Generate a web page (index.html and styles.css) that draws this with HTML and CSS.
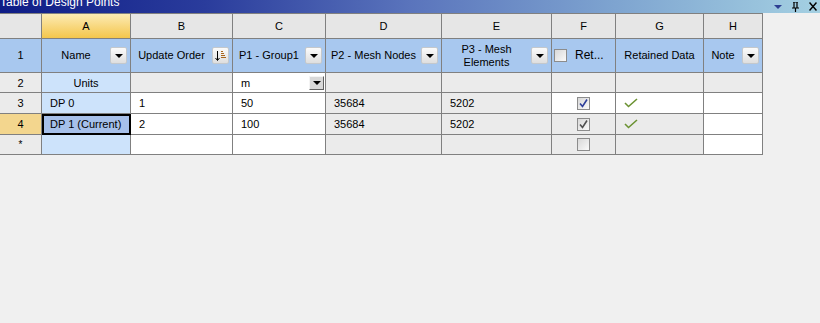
FILE: index.html
```html
<!DOCTYPE html>
<html lang="en">
<head>
  <meta charset="UTF-8">
  <title>Table of Design Points</title>
  <link rel="stylesheet" href="styles.css">
</head>
<body>

<div class="titlebar">
  <span class="title">Table of Design Points</span>
  <div class="wincontrols">
    <svg width="8" height="5" viewBox="0 0 8 5"><polygon points="0,1 8,1 4,5" fill="#2d3f92"/></svg>
    <svg width="9" height="10" viewBox="0 0 9 10"><path d="M2 0h5M3 0v6M6 0v6M1 6h7M4.5 6v4" stroke="#000" stroke-width="1.2" fill="none"/></svg>
    <svg width="8" height="9" viewBox="0 0 8 9"><path d="M0.5 0.5l7 8M7.5 0.5l-7 8" stroke="#000" stroke-width="1.5"/></svg>
  </div>
</div>

<table class="grid">
  <colgroup>
    <col class="c-num"><col class="c-a"><col class="c-b"><col class="c-c"><col class="c-d">
    <col class="c-e"><col class="c-f"><col class="c-g"><col class="c-h">
  </colgroup>
  <tr class="letters">
    <td></td>
    <td class="active">A</td>
    <td>B</td><td>C</td><td>D</td><td>E</td><td>F</td><td>G</td><td>H</td>
  </tr>
  <tr class="heads">
    <td class="num">1</td>
    <td><div class="hcell"><span class="label">Name</span><span class="drop"></span></div></td>
    <td><div class="hcell"><span class="label">Update Order</span>
      <span class="drop sort"><svg width="11" height="12" viewBox="0 0 11 12">
        <path d="M2.5 1v9M0.5 8l2 2.5 2-2.5" stroke="#000" stroke-width="1" fill="none"/>
        <path d="M6 1.5h2M6 3.5h3M6 5.5h4M6 7.5h5" stroke="#a8661f" stroke-width="1"/>
      </svg></span></div></td>
    <td><div class="hcell"><span class="label">P1 - Group1</span><span class="drop"></span></div></td>
    <td><div class="hcell"><span class="label">P2 - Mesh Nodes</span><span class="drop"></span></div></td>
    <td><div class="hcell"><span class="label">P3 - Mesh<br>Elements</span><span class="drop"></span></div></td>
    <td><div class="hcell left"><span class="box"></span><span class="ret">Ret...</span></div></td>
    <td class="center">Retained Data</td>
    <td><div class="hcell"><span class="label">Note</span><span class="drop"></span></div></td>
  </tr>
  <tr>
    <td class="num">2</td>
    <td class="name center">Units</td>
    <td class="gray"></td>
    <td class="white"><div class="combo"><span>m</span><span class="combobtn"></span></div></td>
    <td class="gray"></td><td class="gray"></td><td class="gray"></td><td class="gray"></td><td class="gray"></td>
  </tr>
  <tr>
    <td class="num">3</td>
    <td class="name">DP 0</td>
    <td class="white">1</td>
    <td class="white">50</td>
    <td class="gray">35684</td>
    <td class="gray">5202</td>
    <td class="white center"><span class="box checked"><svg width="11" height="11" viewBox="0 0 11 11"><path d="M2 5.5l2.5 3 4.5-7" stroke="#2e3f9a" stroke-width="1.6" fill="none"/></svg></span></td>
    <td class="white"><svg class="tick" width="14" height="10" viewBox="0 0 14 10"><path d="M1 5l3.5 3.5 8.5-7.5" stroke="#6b9232" stroke-width="1.6" fill="none"/></svg></td>
    <td class="white"></td>
  </tr>
  <tr>
    <td class="num current">4</td>
    <td class="name selected">DP 1 (Current)</td>
    <td class="white">2</td>
    <td class="white">100</td>
    <td class="gray">35684</td>
    <td class="gray">5202</td>
    <td class="gray center"><span class="box checked"><svg width="11" height="11" viewBox="0 0 11 11"><path d="M2 5.5l2.5 3 4.5-7" stroke="#505050" stroke-width="1.6" fill="none"/></svg></span></td>
    <td class="gray"><svg class="tick" width="14" height="10" viewBox="0 0 14 10"><path d="M1 5l3.5 3.5 8.5-7.5" stroke="#6b9232" stroke-width="1.6" fill="none"/></svg></td>
    <td class="white"></td>
  </tr>
  <tr>
    <td class="num star">*</td>
    <td class="name"></td>
    <td class="white"></td>
    <td class="white"></td>
    <td class="gray"></td>
    <td class="gray"></td>
    <td class="gray center"><span class="box"></span></td>
    <td class="gray"></td>
    <td class="white"></td>
  </tr>
</table>

</body>
</html>
```

FILE: styles.css
```css
body {
  margin: 0;
  background-color: #f0f0f0;
  font-family: "Liberation Sans", Arial, sans-serif;
  font-size: 11px;
  color: #000;
}
.titlebar {
  display: flex;
  align-items: flex-start;
  height: 13px;
  overflow: hidden;
  background: linear-gradient(90deg, #0e1c86 0%, #2a3c9c 25%, #5a74bc 50%, #7ea4d0 75%, #a4d0e2 100%);
}
.title {
  color: #fff;
  font-size: 12px;
  line-height: 14px;
  margin-top: -5px;
}
.wincontrols {
  margin-left: auto;
  display: flex;
  align-items: flex-start;
  gap: 9px;
  padding: 2px 3px 0 0;
}
.wincontrols svg { display: block; }
.wincontrols svg:first-child { margin-top: 2px; }

.grid {
  border-collapse: separate;
  border-spacing: 0;
  table-layout: fixed;
  width: 763px;
  border-top: 1px solid #808080;
}
.grid td {
  box-sizing: border-box;
  border-right: 1px solid #808080;
  border-bottom: 1px solid #808080;
  padding: 0 0 0 8px;
  height: 21px;
  white-space: nowrap;
  overflow: hidden;
}
.c-num { width: 42px; }
.c-a { width: 89px; }
.c-b { width: 102px; }
.c-c { width: 93px; }
.c-d { width: 116px; }
.c-e { width: 110px; }
.c-f { width: 64px; }
.c-g { width: 88px; }
.c-h { width: 59px; }

.letters td {
  height: 25px;
  background-color: #e6e6e6;
  text-align: center;
  padding: 0;
}
.letters td.active {
  background: linear-gradient(#fcebb4, #f4c64c);
}
.heads td {
  height: 34px;
  background-color: #a8c8ef;
  padding: 0;
  line-height: 13px;
}
.hcell {
  display: flex;
  align-items: center;
  padding-right: 3px;
}
.hcell .label {
  flex: 1;
  text-align: center;
}
.hcell.left {
  padding-left: 2px;
  gap: 8px;
}
.ret { font-size: 12px; }
.drop {
  box-sizing: border-box;
  width: 17px;
  height: 17px;
  border: 1px solid #c4c8cc;
  border-radius: 2px;
  background: linear-gradient(#fbfbfb, #dedede);
  display: flex;
  align-items: center;
  justify-content: center;
}
.drop::after {
  content: "";
  border-left: 4px solid transparent;
  border-right: 4px solid transparent;
  border-top: 4px solid #000;
}
.drop.sort::after { display: none; }
.drop svg { display: block; }

.center { text-align: center; }
.grid td.center { padding: 0; }
.num {
  background-color: #ebebeb;
  text-align: center;
}
.grid td.num { padding: 0; }
.num.current { background-color: #f3d68e; }
.num.star { font-size: 10px; }
.name { background-color: #cde3fb; }
.name.selected {
  background-color: #a6c0ea;
  outline: 2px solid #000;
  outline-offset: -2px;
}
.gray { background-color: #ebebeb; }
.white { background-color: #fff; }
.grid tr:nth-child(3) td { height: 20px; }
.grid tr:nth-child(6) td { height: 20px; }

.combo {
  display: flex;
  align-items: center;
  padding-right: 1px;
}
.combo span:first-child { flex: 1; }
.combobtn {
  box-sizing: border-box;
  width: 15px;
  height: 14px;
  background-color: #d8d8d8;
  border: 1px solid #f4f4f4;
  border-right-color: #606060;
  border-bottom-color: #606060;
  display: flex;
  align-items: center;
  justify-content: center;
}
.combobtn::after {
  content: "";
  border-left: 4px solid transparent;
  border-right: 4px solid transparent;
  border-top: 4px solid #000;
}

.box {
  box-sizing: border-box;
  display: inline-flex;
  align-items: center;
  justify-content: center;
  width: 13px;
  height: 13px;
  border: 1px solid #8c8c8c;
  background: linear-gradient(135deg, #d8d8d8, #fafafa);
  vertical-align: middle;
}
.box svg { display: block; }
.tick { display: block; }
```
